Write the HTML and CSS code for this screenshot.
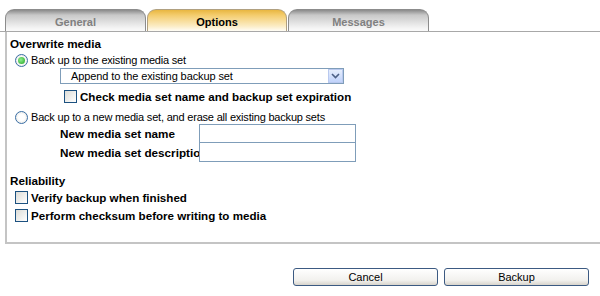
FILE: index.html
```html
<!DOCTYPE html>
<html lang="en">
<head>
    <meta charset="UTF-8">
    <title>Backup options</title>
    <link rel="stylesheet" href="styles.css">
</head>
<body>
    <div class="tabs">
        <div class="tab">General</div>
        <div class="tab active">Options</div>
        <div class="tab">Messages</div>
    </div>

    <div class="panel">
        <div class="section-title">Overwrite media</div>

        <label class="radio-row first">
            <span class="radio checked"></span>
            <span>Back up to the existing media set</span>
        </label>

        <div class="indent">
            <div class="select">
                <span>Append to the existing backup set</span>
                <span class="select-btn">
                    <svg width="9" height="6" viewBox="0 0 9 6"><path d="M1 1 L4.5 4.5 L8 1" fill="none" stroke="#4d6185" stroke-width="1.6"/></svg>
                </span>
            </div>
            <label class="check-row sub">
                <span class="checkbox"></span>
                <span>Check media set name and backup set expiration</span>
            </label>
        </div>

        <label class="radio-row second">
            <span class="radio"></span>
            <span>Back up to a new media set, and erase all existing backup sets</span>
        </label>

        <div class="field-grid">
            <div class="field-label">New media set name</div>
            <div class="text-input"></div>
            <div class="field-label">New media set description</div>
            <div class="text-input"></div>
        </div>

        <div class="section-title reliability">Reliability</div>
        <label class="check-row">
            <span class="checkbox"></span>
            <span>Verify backup when finished</span>
        </label>
        <label class="check-row">
            <span class="checkbox"></span>
            <span>Perform checksum before writing to media</span>
        </label>
    </div>

    <div class="buttons">
        <button>Cancel</button>
        <button>Backup</button>
    </div>
</body>
</html>
```

FILE: styles.css
```css
* {
    margin: 0;
    padding: 0;
    box-sizing: border-box;
}

body {
    font-family: 'Liberation Sans', Arial, sans-serif;
    font-size: 11px;
    color: #000;
    background: white;
    width: 600px;
    height: 296px;
    overflow: hidden;
}

.tabs {
    display: flex;
    gap: 1px;
    padding: 9px 0 0 5px;
    height: 32px;
    border-bottom: 1px solid #a8a8a8;
}

.tab {
    width: 141px;
    height: 22px;
    border: 1px solid #8c8c8c;
    border-bottom: none;
    border-radius: 9px 9px 0 0;
    background: linear-gradient(#8a8a8a 0px, #c8c8c8 5px, #f4f4f4 18px, #fafafa 100%);
    color: #808080;
    font-weight: bold;
    font-size: 11px;
    text-align: center;
    padding-top: 6px;
}

.tab.active {
    width: 140px;
    border-color: #b0a080;
    background: linear-gradient(#e8b640 0px, #f4cc6c 5px, #fbecc4 16px, #fffdf6 100%);
    color: #000;
}

.panel {
    margin-left: 5px;
    height: 212px;
    border-left: 2px solid #c4c4c4;
    border-bottom: 2px solid #c4c4c4;
    padding: 5px 0 0 3px;
}

.section-title {
    font-weight: bold;
    font-size: 11.7px;
    height: 14px;
    line-height: 14px;
}

.reliability {
    margin-top: 12px;
}

.radio-row {
    display: flex;
    align-items: center;
    gap: 3px;
    margin-left: 5px;
    height: 14px;
    letter-spacing: -0.2px;
}

.radio-row.first {
    margin-top: 2px;
}

.radio-row.second {
    margin-top: 7px;
}

.radio {
    width: 13px;
    height: 13px;
    border-radius: 50%;
    border: 1px solid #3a6ea5;
    background: radial-gradient(circle, #ffffff 40%, #dcdcd6 100%);
    display: flex;
    align-items: center;
    justify-content: center;
    flex-shrink: 0;
}

.radio.checked::after {
    content: "";
    width: 7px;
    height: 7px;
    border-radius: 50%;
    background: radial-gradient(circle at 40% 40%, #8ef08e, #21a121);
}

.indent {
    padding-left: 50px;
    padding-top: 1px;
}

.select {
    width: 284px;
    height: 16px;
    border: 1px solid #7f9db9;
    display: flex;
    align-items: center;
    justify-content: space-between;
    padding-left: 10px;
    letter-spacing: -0.1px;
}

.select-btn {
    width: 15px;
    height: 14px;
    background: linear-gradient(#e6eefc, #c1d3fb);
    border: 1px solid #b9c9ef;
    display: flex;
    align-items: center;
    justify-content: center;
}

.check-row {
    display: flex;
    align-items: center;
    gap: 3px;
    margin-left: 5px;
    height: 18px;
    font-weight: bold;
    font-size: 11.6px;
}

.check-row.sub {
    margin-left: 4px;
    margin-top: 5px;
    height: 14px;
}

.checkbox {
    width: 13px;
    height: 13px;
    border: 1px solid #1c5180;
    background: linear-gradient(135deg, #dcdcd7, #ffffff);
    flex-shrink: 0;
}

.field-grid {
    display: grid;
    grid-template-columns: 139px 157px;
    grid-auto-rows: 19px;
    margin-left: 50px;
}

.field-label {
    font-weight: bold;
    font-size: 11.7px;
    white-space: nowrap;
    overflow: hidden;
    line-height: 19px;
}

.text-input {
    border: 1px solid #7f9db9;
    background: white;
}

.text-input + .field-label + .text-input {
    border-top: none;
}

.buttons {
    display: flex;
    gap: 6px;
    padding: 24px 0 0 293px;
}

button {
    width: 145px;
    height: 18px;
    border: 1px solid #3c5a82;
    border-radius: 3px;
    background: linear-gradient(#ffffff, #f2f1ee 70%, #d8d4cc);
    font-family: 'Liberation Sans', Arial, sans-serif;
    font-size: 11px;
    color: #000;
}
```
